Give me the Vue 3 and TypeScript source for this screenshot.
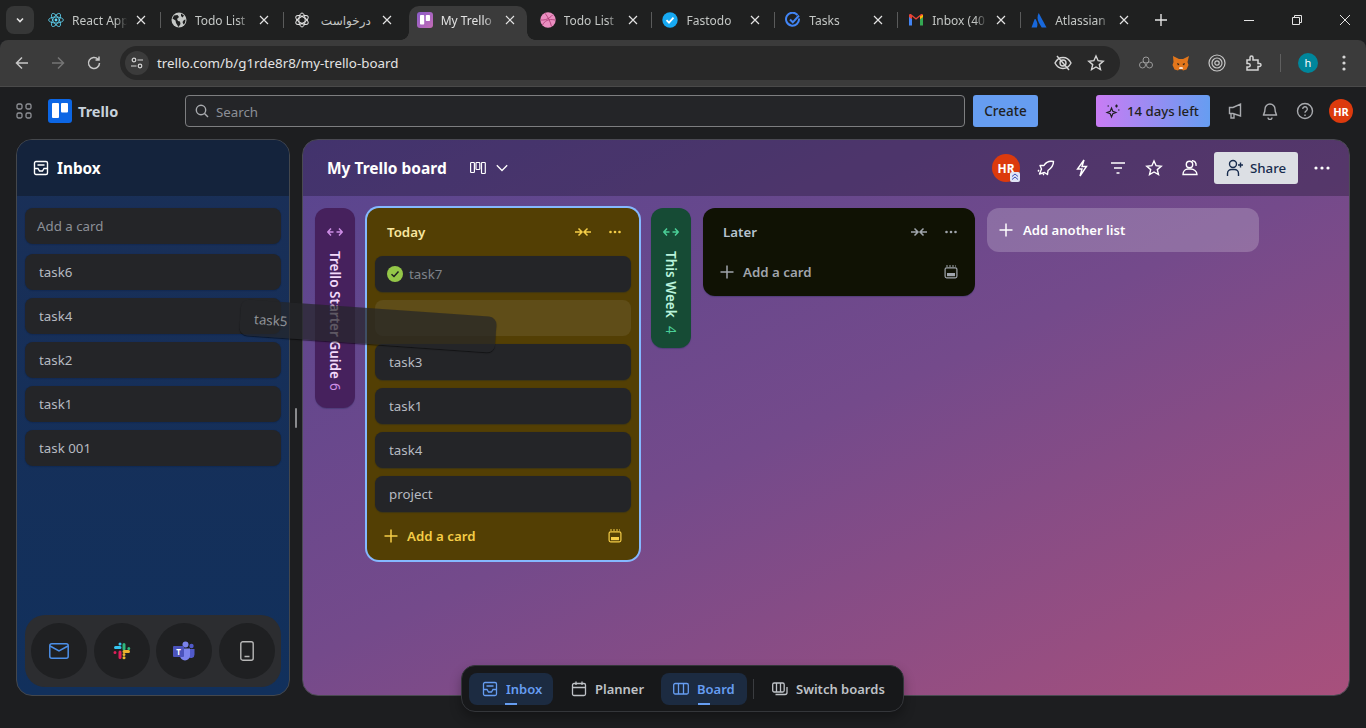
<script setup lang="ts">
const tabs = [
  { icon: 'react', title: 'React App' },
  { icon: 'globe', title: 'Todo List' },
  { icon: 'gpt', title: 'درخواست', rtl: true },
  { icon: 'trello', title: 'My Trello', active: true },
  { icon: 'dribbble', title: 'Todo List' },
  { icon: 'fastodo', title: 'Fastodo' },
  { icon: 'tasks', title: 'Tasks' },
  { icon: 'gmail', title: 'Inbox (40' },
  { icon: 'atlassian', title: 'Atlassian' }
]
const inboxCards = ['task6', 'task4', 'task2', 'task1', 'task 001']
const todayCards = ['task3', 'task1', 'task4', 'project']
</script>

<template>
  <div class="page">
    <div class="tabstrip">
      <button class="tab-search">
        <svg width="12" height="12" viewBox="0 0 12 12" fill="none" stroke="#e3e3e3" stroke-width="1.6"><path d="M3 4.5 6 7.5 9 4.5" /></svg>
      </button>
      <div v-for="(t, i) in tabs" :key="i" class="tab" :class="{ active: t.active, nosep: i === 0 || i === 3 || i === 4 }">
        <span class="favicon">
          <svg v-if="t.icon === 'react'" viewBox="0 0 16 16" fill="none" stroke="#61dafb" stroke-width=".8">
            <ellipse cx="8" cy="8" rx="7.4" ry="3" />
            <ellipse cx="8" cy="8" rx="7.4" ry="3" transform="rotate(60 8 8)" />
            <ellipse cx="8" cy="8" rx="7.4" ry="3" transform="rotate(120 8 8)" />
            <circle cx="8" cy="8" r="1.4" fill="#61dafb" stroke="none" />
          </svg>
          <svg v-else-if="t.icon === 'globe'" viewBox="0 0 16 16">
            <circle cx="8" cy="8" r="7.5" fill="#c4c7c5" />
            <path d="M3 3.5 6.5 3 8 5 6 7 7 9l2 .5.5 2.5-2 3L5 11 4.5 8.500 1.500 6.500zM10 1.500l3 2-1.500 2L10 4zM13 8l1.500-.500-.500 3.500-1.500 1.500L11.500 10z" fill="#1f2020" />
          </svg>
          <svg v-else-if="t.icon === 'gpt'" viewBox="0 0 16 16" fill="none" stroke="#e3e3e3" stroke-width="1">
            <ellipse cx="8" cy="8" rx="3.200" ry="7" />
            <ellipse cx="8" cy="8" rx="3.200" ry="7" transform="rotate(60 8 8)" />
            <ellipse cx="8" cy="8" rx="3.200" ry="7" transform="rotate(120 8 8)" />
          </svg>
          <svg v-else-if="t.icon === 'trello'" viewBox="0 0 16 16">
            <defs><linearGradient id="trelloFav" x1="0" y1="0" x2="1" y2="1"><stop offset="0" stop-color="#8a5cc9" /><stop offset="1" stop-color="#c46bb5" /></linearGradient></defs>
            <rect width="16" height="16" rx="3" fill="url(#trelloFav)" />
            <rect x="3" y="3" width="4.200" height="9.500" rx=".8" fill="#fff" />
            <rect x="8.800" y="3" width="4.200" height="6" rx=".8" fill="#fff" />
          </svg>
          <svg v-else-if="t.icon === 'dribbble'" viewBox="0 0 16 16" fill="none">
            <circle cx="8" cy="8" r="7.700" fill="#ea8ec0" />
            <path d="M5 1.200C8 5 10.500 10 11.500 14.500M1 8c4 .3 8-1 11.500-5M2.500 13c2-4 6-6.500 12.500-5" stroke="#a8366f" stroke-width=".8" />
          </svg>
          <svg v-else-if="t.icon === 'fastodo'" viewBox="0 0 16 16" fill="none">
            <circle cx="8" cy="8" r="7.700" fill="#17a9f2" />
            <path d="M4.500 8.200 7 10.700l4.500-5" stroke="#fff" stroke-width="1.800" />
          </svg>
          <svg v-else-if="t.icon === 'tasks'" viewBox="0 0 16 16" fill="none">
            <path d="M12.500 3A6.500 6.500 0 1 0 14 6.500" stroke="#4285f4" stroke-width="2" />
            <path d="M5 7.500 7.800 10.300 14 3.500" stroke="#4285f4" stroke-width="2" />
          </svg>
          <svg v-else-if="t.icon === 'gmail'" viewBox="0 0 16 16">
            <path d="M1 4v9.500h3V7z" fill="#4285f4" />
            <path d="M12 7v6.500h3V4z" fill="#34a853" />
            <path d="M1 3.500C1 2.200 2.500 1.700 3.500 2.500L8 6l4.500-3.500C13.500 1.700 15 2.200 15 3.500V5l-3 2.300V4.500L8 7.800 4 4.500v2.800L1 5z" fill="#ea4335" />
            <path d="M12 4.500 15 2.800V5l-3 2.300z" fill="#fbbc04" />
          </svg>
          <svg v-else viewBox="0 0 16 16">
            <path d="M7.700 1C6 4.500 6.200 7.500 8 11l2.700 4.500H15.500z" fill="#1868db" />
            <path d="M4.800 7.500C4.300 6.900 3.800 7 3.500 7.600L.5 15.500h5.400c1-2.500.6-5.500-1.100-8z" fill="#1868db" />
          </svg>
        </span>
        <span class="tab-title" :class="{ rtl: t.rtl }">{{ t.title }}</span>
        <svg class="tab-close" width="10" height="10" viewBox="0 0 10 10" stroke="#e3e3e3" stroke-width="1.200"><path d="M1 1l8 8M9 1 1 9" /></svg>
      </div>
      <svg class="new-tab" width="12" height="12" viewBox="0 0 12 12" stroke="#e3e3e3" stroke-width="1.400"><path d="M6 0v12M0 6h12" /></svg>
      <div class="win-controls">
        <svg width="10" height="10" viewBox="0 0 10 10" stroke="#e3e3e3"><path d="M0 5.500h10" /></svg>
        <svg width="10" height="10" viewBox="0 0 10 10" fill="none" stroke="#e3e3e3"><path d="M.5 2.500h7v7h-7zM2.500 2.500v-2h7v7h-2" /></svg>
        <svg width="10" height="10" viewBox="0 0 10 10" stroke="#e3e3e3"><path d="M0 0l10 10M10 0 0 10" /></svg>
      </div>
    </div>

    <div class="toolbar">
      <svg class="nav-ico" width="16" height="16" viewBox="0 0 16 16" fill="none" stroke="#c7c7c7" stroke-width="1.500"><path d="M14 8H2.500M8 2.500 2.500 8 8 13.500" /></svg>
      <svg class="nav-ico" width="16" height="16" viewBox="0 0 16 16" fill="none" stroke="#757575" stroke-width="1.500"><path d="M2 8h11.500M8 2.500 13.500 8 8 13.500" /></svg>
      <svg class="nav-ico" width="16" height="16" viewBox="0 0 16 16" fill="none" stroke="#c7c7c7" stroke-width="1.500"><path d="M13.500 8A5.500 5.500 0 1 1 12 4.200M13 1.500v3.500H9.500" /></svg>
      <div class="omnibox">
        <span class="site-info">
          <svg width="14" height="14" viewBox="0 0 14 14" fill="none" stroke="#d5d5d5" stroke-width="1.200"><circle cx="4" cy="4" r="1.800" /><path d="M7.500 4H13M1 10h5.500" /><circle cx="10" cy="10" r="1.800" /></svg>
        </span>
        <span class="url">trello.com/b/g1rde8r8/my-trello-board</span>
        <svg class="omni-eye" width="18" height="18" viewBox="0 0 18 18" fill="none" stroke="#d5d5d5" stroke-width="1.400"><path d="M1 9c2-4 5-5.500 8-5.500S15 5 17 9c-2 4-5 5.500-8 5.500S3 13 1 9z" /><circle cx="9" cy="9" r="3" /><path d="M3 2l12 14" /></svg>
        <svg class="omni-star" width="18" height="18" viewBox="0 0 18 18" fill="none" stroke="#d5d5d5" stroke-width="1.400"><path d="M9 2l2.100 4.700 5.100.5-3.900 3.400 1.200 5L9 13l-4.500 2.600 1.200-5L1.800 7.200l5.100-.5z" /></svg>
      </div>
      <div class="extensions">
        <svg width="16" height="16" viewBox="0 0 16 16" fill="none" stroke="#9a9a9a" stroke-width="1"><circle cx="8" cy="5" r="3" /><circle cx="4.500" cy="10" r="3" /><circle cx="11.500" cy="10" r="3" /></svg>
        <svg width="18" height="18" viewBox="0 0 18 18"><path d="M1 2l6 3h4l6-3-1.500 6 1 3-2 4.500-3.500 1-1-1H7l-1 1-3.500-1-2-4.500 1-3z" fill="#e2761b" /><path d="M5 9l2.500 1L6 11.500zM13 9l-2.500 1 1.500 1.500z" fill="#27201a" /><path d="M7 15h4l-.5-2h-3z" fill="#f6e0cf" /></svg>
        <svg width="18" height="18" viewBox="0 0 18 18" fill="none" stroke="#c7c7c7" stroke-width="1.200"><circle cx="9" cy="9" r="8" /><circle cx="9" cy="9" r="5" /><circle cx="9" cy="9" r="2.200" /></svg>
        <svg width="18" height="18" viewBox="0 0 18 18" fill="none" stroke="#d5d5d5" stroke-width="1.500"><path d="M3 6h3V3.500a1.500 1.500 0 0 1 3 0V6h5v3.500h1.500v0a1.500 1.500 0 0 1 0 3H14V16H3v-3h1.500a1.500 1.500 0 0 0 0-3.500H3z" /></svg>
        <span class="ext-sep"></span>
        <span class="profile">h</span>
        <svg class="chrome-menu" width="4" height="16" viewBox="0 0 4 16" fill="#d5d5d5"><circle cx="2" cy="2" r="1.600" /><circle cx="2" cy="8" r="1.600" /><circle cx="2" cy="14" r="1.600" /></svg>
      </div>
    </div>

    <header class="topbar">
      <svg class="grid-ico" width="16" height="16" viewBox="0 0 16 16" fill="none" stroke="#8f9196" stroke-width="1.300"><rect x="1" y="1" width="5" height="5" rx="1.500" /><rect x="10" y="1" width="5" height="5" rx="1.500" /><rect x="1" y="10" width="5" height="5" rx="1.500" /><rect x="10" y="10" width="5" height="5" rx="1.500" /></svg>
      <div class="logo">
        <svg width="24" height="24" viewBox="0 0 24 24"><rect width="24" height="24" rx="3" fill="#0c66e4" /><rect x="4" y="4" width="7" height="15" rx="1" fill="#fff" /><rect x="13" y="4" width="7" height="9.500" rx="1" fill="#fff" /></svg>
        <span>Trello</span>
      </div>
      <div class="search">
        <svg width="16" height="16" viewBox="0 0 16 16" fill="none" stroke="#a9abaf" stroke-width="1.400"><circle cx="7" cy="7" r="4.700" /><path d="M10.500 10.500 14 14" /></svg>
        <span class="search-text">Search</span>
      </div>
      <button class="create">Create</button>
      <button class="trial">
        <svg width="16" height="16" viewBox="0 0 16 16" fill="none" stroke="#1f1f21" stroke-width="1.200"><path d="M6.500 5 7.800 8.200 11 9.500 7.800 10.800 6.500 14 5.200 10.800 2 9.500 5.200 8.200zM11.500 1.500v3M10 3h3M13 7h1.500M2.500 3h1.500" /></svg>
        14 days left
      </button>
      <svg class="top-ico" width="18" height="18" viewBox="0 0 18 18" fill="none" stroke="#a9abaf" stroke-width="1.400"><path d="M14.500 2v12L7 11.500H3.500v-6H7zM5 11.500V16h3v-4" /></svg>
      <svg class="top-ico" width="18" height="18" viewBox="0 0 18 18" fill="none" stroke="#a9abaf" stroke-width="1.400"><path d="M9 2a5 5 0 0 0-5 5c0 4-1.500 5-1.500 6h13c0-1-1.500-2-1.500-6a5 5 0 0 0-5-5zM7 15.500a2 2 0 0 0 4 0" /></svg>
      <svg class="top-ico" width="18" height="18" viewBox="0 0 18 18" fill="none" stroke="#a9abaf" stroke-width="1.400"><circle cx="9" cy="9" r="7.500" /><path d="M6.700 7a2.300 2.300 0 1 1 3.300 2.100c-.7.400-1 .8-1 1.600" /><path d="M9 12.500v1.500" /></svg>
      <span class="avatar small">HR</span>
    </header>

    <main class="workspace">
      <aside class="inbox">
        <div class="inbox-head">
          <svg width="16" height="16" viewBox="0 0 16 16" fill="none" stroke="#fff" stroke-width="1.400"><rect x="1.500" y="1.500" width="13" height="13" rx="1.500" /><path d="M4.500 5h7M1.500 8.500h3.500l1.500 2.500h3l1.500-2.500h3.500" /></svg>
          <span>Inbox</span>
        </div>
        <div class="inbox-body">
          <div class="card add-input">Add a card</div>
          <div v-for="c in inboxCards" :key="c" class="card">{{ c }}</div>
          <div class="connect">
            <span class="round">
              <svg width="20" height="16" viewBox="0 0 20 16" fill="none" stroke="#4c8fe8" stroke-width="1.500"><rect x=".8" y=".8" width="18.400" height="14.400" rx="2" /><path d="M1 3l9 5 9-5" /></svg>
            </span>
            <span class="round">
              <svg width="18" height="18" viewBox="0 0 18 18" fill="none" stroke-linecap="round" stroke-width="3">
                <path d="M7 2v0M7 5.600H2.500" stroke="#36c5f0" />
                <path d="M11 2.500v4.500M15.800 6.500v0" stroke="#2eb67d" />
                <path d="M11 12.500v0M11 9.500h4.500" stroke="#ecb22e" />
                <path d="M7 10v5.500M2 10.500v0" stroke="#e01e5a" />
                <path d="M11 15.800v0" stroke="#ecb22e" />
              </svg>
            </span>
            <span class="round">
              <svg width="22" height="20" viewBox="0 0 22 20">
                <circle cx="12.500" cy="3.500" r="3" fill="#7b83eb" />
                <circle cx="18.500" cy="5" r="2.200" fill="#5059c9" />
                <path d="M14 8h7.500v5.500a3.500 3.500 0 0 1-6 2.500z" fill="#5059c9" />
                <path d="M7 7.500h10v7a5 5 0 0 1-10 0z" fill="#7b83eb" />
                <rect x="0" y="5" width="11" height="11" rx="1" fill="#4b53bc" />
                <text x="5.500" y="14" class="teams-t">T</text>
              </svg>
            </span>
            <span class="round">
              <svg width="14" height="20" viewBox="0 0 14 20" fill="none" stroke="#b8b8b8" stroke-width="1.400"><rect x=".8" y=".8" width="12.400" height="18.400" rx="2" /><path d="M4.500 15.500h5" /></svg>
            </span>
          </div>
        </div>
      </aside>

      <div class="splitter"><span></span></div>

      <section class="board">
        <div class="board-head">
          <h1>My Trello board</h1>
          <svg class="views-ico" width="16" height="16" viewBox="0 0 16 16" fill="none" stroke="#fff" stroke-width="1.200"><rect x=".6" y="2.500" width="3.800" height="10" rx=".7" /><rect x="6" y="2.500" width="3.800" height="7" rx=".7" /><rect x="11.500" y="2.500" width="3.800" height="11" rx=".7" /></svg>
          <svg class="chev" width="12" height="8" viewBox="0 0 12 8" fill="none" stroke="#fff" stroke-width="1.300"><path d="M.8 1.200 6 6.500l5.200-5.300" /></svg>
          <div class="board-actions">
            <span class="avatar big">HR
              <svg class="admin-badge" width="10" height="10" viewBox="0 0 10 10" fill="none" stroke="#3d4fb5" stroke-width="1"><rect width="10" height="10" rx="2" fill="#dfe4f5" stroke="none" /><path d="M2 4.500 5 2l3 2.500M2 7.500 5 5l3 2.500" /></svg>
            </span>
            <svg class="act" width="18" height="18" viewBox="0 0 18 18" fill="none" stroke="#fff" stroke-width="1.400" stroke-linejoin="round"><path d="M16.500 2.500c-4-.8-7.500.5-9.500 4L3 6.500l1.500 3.500-2 5 5-1.500 3 2 .5-4c3.500-2.500 5.500-5.500 5.500-9zM2 11l-1 1.500M6 16l1-1" /></svg>
            <svg class="act" width="18" height="18" viewBox="0 0 18 18" fill="none" stroke="#fff" stroke-width="1.400"><path d="M11 1 4.500 10H9L7 17l6.500-9.500H9z" /></svg>
            <svg class="act" width="18" height="18" viewBox="0 0 18 18" fill="none" stroke="#fff" stroke-width="1.500"><path d="M2 4h14M5 9h8M7.500 14h3" /></svg>
            <svg class="act" width="18" height="18" viewBox="0 0 18 18" fill="none" stroke="#fff" stroke-width="1.400"><path d="M9 2l2.100 4.700 5.100.5-3.900 3.400 1.200 5L9 13l-4.500 2.600 1.200-5L1.800 7.200l5.100-.5z" /></svg>
            <svg class="act" width="18" height="18" viewBox="0 0 18 18" fill="none" stroke="#fff" stroke-width="1.400"><circle cx="8.500" cy="5.500" r="3.200" /><path d="M2 15.500c0-3.500 2.500-5.500 5-5.500h3c2.500 0 6 2 6 5.500zM11 1.800c2.500-.3 4.500 2 4 5" /></svg>
            <button class="share">
              <svg width="18" height="18" viewBox="0 0 18 18" fill="none" stroke="#172b4d" stroke-width="1.400"><circle cx="7" cy="5" r="3.500" /><path d="M1.500 17v-2.500c0-2.500 2-4 4-4h3c2 0 4 1.500 4 4V17M14.500 3.500v5M12 6h5" /></svg>
              Share
            </button>
            <svg class="act more" width="16" height="4" viewBox="0 0 16 4" fill="#fff"><circle cx="2" cy="2" r="1.600" /><circle cx="8" cy="2" r="1.600" /><circle cx="14" cy="2" r="1.600" /></svg>
          </div>
        </div>

        <div class="lists">
          <div class="rail guide">
            <svg width="16" height="10" viewBox="0 0 16 10" fill="none" stroke="currentColor" stroke-width="1.500"><path d="M6.500 5H1M4 1.500.8 5 4 8.500M9.500 5H15M12 1.500 15.200 5 12 8.500" /></svg>
            <span class="rail-label">Trello Starter Guide</span>
            <span class="rail-count">6</span>
          </div>

          <div class="list today">
            <div class="list-head">
              <span class="list-title">Today</span>
              <svg class="collapse" width="18" height="10" viewBox="0 0 18 10" fill="none" stroke="currentColor" stroke-width="1.500"><path d="M1 5h6M4.500 1.500 8 5 4.500 8.500M17 5h-6M13.500 1.500 10 5l3.500 3.500" /></svg>
              <svg class="dots" width="12" height="4" viewBox="0 0 12 4" fill="currentColor"><circle cx="1.500" cy="2" r="1.300" /><circle cx="6" cy="2" r="1.300" /><circle cx="10.500" cy="2" r="1.300" /></svg>
            </div>
            <div class="list-cards">
              <div class="card done">
                <svg width="16" height="16" viewBox="0 0 16 16" fill="none"><circle cx="8" cy="8" r="8" fill="#94c748" /><path d="M4.500 8.200 7 10.500l4.500-5" stroke="#1f1f21" stroke-width="1.500" /></svg>
                <span>task7</span>
              </div>
              <div class="card placeholder"></div>
              <div v-for="c in todayCards" :key="c" class="card">{{ c }}</div>
            </div>
            <div class="list-foot">
              <svg width="14" height="14" viewBox="0 0 14 14" stroke="currentColor" stroke-width="1.500"><path d="M7 .5v13M.5 7h13" /></svg>
              <span>Add a card</span>
              <svg class="template" width="14" height="14" viewBox="0 0 14 14" fill="none" stroke="currentColor" stroke-width="1.200"><path d="M2 1h10" stroke-dasharray="2 1" /><rect x="1.100" y="2.800" width="11.800" height="10" rx="1.500" /><rect x="3" y="8" width="8" height="3.200" fill="currentColor" stroke="none" /></svg>
            </div>
          </div>

          <div class="rail week">
            <svg width="16" height="10" viewBox="0 0 16 10" fill="none" stroke="currentColor" stroke-width="1.500"><path d="M6.500 5H1M4 1.500.8 5 4 8.500M9.500 5H15M12 1.500 15.200 5 12 8.500" /></svg>
            <span class="rail-label">This Week</span>
            <span class="rail-count">4</span>
          </div>

          <div class="list later">
            <div class="list-head">
              <span class="list-title">Later</span>
              <svg class="collapse" width="18" height="10" viewBox="0 0 18 10" fill="none" stroke="currentColor" stroke-width="1.500"><path d="M1 5h6M4.500 1.500 8 5 4.500 8.500M17 5h-6M13.500 1.500 10 5l3.500 3.500" /></svg>
              <svg class="dots" width="12" height="4" viewBox="0 0 12 4" fill="currentColor"><circle cx="1.500" cy="2" r="1.300" /><circle cx="6" cy="2" r="1.300" /><circle cx="10.500" cy="2" r="1.300" /></svg>
            </div>
            <div class="list-foot">
              <svg width="14" height="14" viewBox="0 0 14 14" stroke="currentColor" stroke-width="1.500"><path d="M7 .5v13M.5 7h13" /></svg>
              <span>Add a card</span>
              <svg class="template" width="14" height="14" viewBox="0 0 14 14" fill="none" stroke="currentColor" stroke-width="1.200"><path d="M2 1h10" stroke-dasharray="2 1" /><rect x="1.100" y="2.800" width="11.800" height="10" rx="1.500" /><rect x="3" y="8" width="8" height="3.200" fill="currentColor" stroke="none" /></svg>
            </div>
          </div>

          <button class="add-list">
            <svg width="14" height="14" viewBox="0 0 14 14" stroke="#fff" stroke-width="1.500"><path d="M7 .5v13M.5 7h13" /></svg>
            Add another list
          </button>
        </div>
      </section>
    </main>

    <div class="drag-card">task5</div>

    <nav class="dock">
      <a class="dock-item on inbox-tab">
        <svg width="16" height="16" viewBox="0 0 16 16" fill="none" stroke="currentColor" stroke-width="1.300"><rect x="1.500" y="1.500" width="13" height="13" rx="1.500" /><path d="M4.500 5h7M1.500 8.500h3.500l1.500 2.500h3l1.500-2.500h3.500" /></svg>
        Inbox
      </a>
      <a class="dock-item planner-tab">
        <svg width="16" height="16" viewBox="0 0 16 16" fill="none" stroke="currentColor" stroke-width="1.300"><rect x="1.500" y="2.500" width="13" height="12" rx="1.500" /><path d="M1.500 6.500h13M5 .5v3.500M11 .5v3.500" /></svg>
        Planner
      </a>
      <a class="dock-item on board-tab">
        <svg width="16" height="16" viewBox="0 0 16 16" fill="none" stroke="currentColor" stroke-width="1.300"><rect x=".7" y="2.500" width="14.600" height="10.500" rx="1.500" /><path d="M5.500 2.500V13M10.500 2.500V13" /></svg>
        Board
      </a>
      <span class="dock-sep"></span>
      <a class="dock-item switch-tab">
        <svg width="16" height="16" viewBox="0 0 16 16" fill="none" stroke="currentColor" stroke-width="1.300"><rect x=".7" y="2" width="11.500" height="9" rx="1.500" /><path d="M4.500 2v9M8.500 2v9M15 6v5.500a2 2 0 0 1-2 2H3.500" /></svg>
        Switch boards
      </a>
    </nav>
  </div>
</template>

<style>
html, body {
  margin: 0;
  background: #1d1e20;
}
</style>

<style scoped>
.page {
  position: relative;
  width: 1366px;
  height: 728px;
  overflow: hidden;
  display: flex;
  flex-direction: column;
  background: #1d1e20;
  font-family: "Noto Sans", "DejaVu Sans", sans-serif;
  font-size: 13.3px;
  color: #b6c2cf;
}
button {
  border: 0;
  font-family: inherit;
  padding: 0;
}

.tabstrip {
  height: 40px;
  flex: none;
  display: flex;
  align-items: flex-end;
  background: #1f2020;
}
.tab-search {
  width: 28px;
  height: 28px;
  margin: 0 4px 6px 6px;
  border-radius: 8px;
  background: #363737;
  display: flex;
  align-items: center;
  justify-content: center;
}
.tab {
  position: relative;
  width: 122.9px;
  height: 34px;
  flex: none;
  display: flex;
  align-items: center;
  padding: 0 0 6px 10px;
  box-sizing: border-box;
  color: #c4c7c5;
  font-size: 12px;
}
.tab::before {
  content: "";
  position: absolute;
  left: -1px;
  top: 6px;
  height: 16px;
  width: 1px;
  background: #5a5b5b;
}
.tab.nosep::before {
  display: none;
}
.tab.active {
  color: #e3e3e3;
}
.tab.active::after {
  content: "";
  position: absolute;
  left: 2px;
  right: 3px;
  top: 0;
  bottom: 0;
  border-radius: 10px 10px 0 0;
  background: #3b3b3b;
}
.tab.active::before {
  display: block;
  left: -6px;
  right: -5px;
  top: auto;
  bottom: 0;
  width: auto;
  height: 8px;
  background:
    radial-gradient(circle at 0 0, transparent 7.5px, #3b3b3b 8px) left bottom / 8px 8px no-repeat,
    radial-gradient(circle at 100% 0, transparent 7.5px, #3b3b3b 8px) right bottom / 8px 8px no-repeat;
}
.tab.active > * {
  position: relative;
  z-index: 1;
}
.favicon {
  width: 16px;
  height: 16px;
  flex: none;
  display: block;
}
.favicon svg {
  display: block;
  width: 16px;
  height: 16px;
}
.tab-title {
  margin-left: 8px;
  width: 60px;
  flex: none;
  box-sizing: border-box;
  white-space: nowrap;
  overflow: hidden;
  -webkit-mask-image: linear-gradient(90deg, #000 72%, transparent 92%);
  mask-image: linear-gradient(90deg, #000 72%, transparent 92%);
}
.tab-title.rtl {
  direction: rtl;
  padding-left: 7px;
  padding-right: 7px;
  -webkit-mask-image: none;
  mask-image: none;
}
.tab-close {
  margin-left: 4px;
  flex: none;
}
.new-tab {
  margin: 0 0 14px 11px;
}
.win-controls {
  margin-left: auto;
  height: 40px;
  width: 142px;
  padding-left: 20px;
  box-sizing: border-box;
  display: flex;
  align-items: center;
  gap: 38px;
}

.toolbar {
  height: 46px;
  flex: none;
  display: flex;
  align-items: center;
  padding-left: 14px;
  background: #3b3b3b;
  border-radius: 8px 8px 0 0;
  border-bottom: 1px solid #4a4a4a;
  box-sizing: content-box;
}
.nav-ico {
  margin-right: 20px;
  flex: none;
}
.omnibox {
  width: 1000px;
  height: 34px;
  margin-left: -2px;
  flex: none;
  display: flex;
  align-items: center;
  border-radius: 17px;
  background: #282828;
  color: #e3e3e3;
}
.site-info {
  width: 24px;
  height: 24px;
  margin-left: 5px;
  border-radius: 50%;
  background: #3b3b3b;
  display: flex;
  align-items: center;
  justify-content: center;
}
.url {
  margin-left: 8px;
  font-size: 13.35px;
}
.omni-eye {
  margin-left: auto;
}
.omni-star {
  margin: 0 15px 0 15px;
}
.extensions {
  display: flex;
  align-items: center;
  margin-left: 18px;
  gap: 18px;
}
.ext-sep {
  width: 1px;
  height: 18px;
  background: #5f5f5f;
}
.profile {
  width: 20px;
  height: 20px;
  margin-left: -1px;
  border-radius: 50%;
  background: #00869b;
  color: #fff;
  font-size: 11px;
  line-height: 20px;
  text-align: center;
}
.chrome-menu {
  margin-left: 6px;
}

.topbar {
  height: 48px;
  flex: none;
  display: flex;
  align-items: center;
  padding-left: 16px;
}
.grid-ico {
  flex: none;
}
.logo {
  display: flex;
  align-items: center;
  gap: 6px;
  margin-left: 16px;
  width: 137px;
  font-size: 14.5px;
  font-weight: 700;
  color: #c7d1db;
}
.search {
  width: 780px;
  height: 32px;
  box-sizing: border-box;
  display: flex;
  align-items: center;
  gap: 6px;
  padding-left: 8px;
  border: 1px solid #7d7e80;
  border-radius: 4px;
  background: #242528;
  color: #8c8f97;
}
.search-text {
  padding-top: 1px;
}
.create {
  width: 65px;
  height: 32px;
  margin-left: 8px;
  border-radius: 3px;
  background: #669df1;
  color: #1f1f21;
  font-size: 13.5px;
  font-weight: 500;
}
.trial {
  width: 114px;
  height: 32px;
  margin-left: 58px;
  padding-left: 9px;
  border-radius: 3px;
  background: linear-gradient(90deg, #c97cf4, #669df1);
  color: #1f1f21;
  font-size: 13.2px;
  font-weight: 500;
  display: flex;
  align-items: center;
  gap: 6px;
}
.top-ico {
  margin-left: 17px;
  flex: none;
}
.trial + .top-ico {
  margin-left: 16px;
}
.avatar {
  flex: none;
  border-radius: 50%;
  background: #dc3a0d;
  color: #fff;
  font-weight: 700;
  display: flex;
  align-items: center;
  justify-content: center;
}
.avatar.small {
  width: 24px;
  height: 24px;
  margin-left: 15px;
  font-size: 11px;
}
.avatar.big {
  position: relative;
  width: 28px;
  height: 28px;
  margin-right: -1px;
  font-size: 12px;
}
.admin-badge {
  position: absolute;
  right: 0;
  bottom: 0;
}

.workspace {
  flex: 1;
  min-height: 0;
  display: flex;
  padding: 4px 16px 32px;
}
.inbox {
  width: 274px;
  flex: none;
  box-sizing: border-box;
  display: flex;
  flex-direction: column;
  border: 1px solid #44474c;
  border-radius: 16px;
  overflow: hidden;
  background: linear-gradient(180deg, #1a2f57, #11305c);
}
.inbox-head {
  height: 56px;
  flex: none;
  display: flex;
  align-items: center;
  gap: 8px;
  padding-left: 16px;
  background: #14233c;
  color: #fff;
  font-size: 15.3px;
  font-weight: 700;
}
.inbox-body {
  flex: 1;
  min-height: 0;
  display: flex;
  flex-direction: column;
  gap: 8px;
  padding: 12px 8px 8px;
}
.card {
  height: 36px;
  flex: none;
  box-sizing: border-box;
  display: flex;
  align-items: center;
  padding: 0 14px;
  border-radius: 8px;
  background: #242528;
  box-shadow: 0 1px 1px #091e4240, 0 0 1px #091e424f;
  color: #b6bac1;
}
.add-input {
  padding-left: 12px;
  color: #8c9097;
  margin-bottom: 2px;
}
.connect {
  margin-top: auto;
  height: 72px;
  display: flex;
  align-items: center;
  justify-content: space-between;
  padding: 0 6px;
  border-radius: 20px;
  background: #2c2d30;
}
.round {
  width: 56px;
  height: 56px;
  border-radius: 50%;
  background: #1f2022;
  display: flex;
  align-items: center;
  justify-content: center;
}
.teams-t {
  fill: #fff;
  font-size: 8px;
  font-weight: 700;
  text-anchor: middle;
}

.splitter {
  width: 12px;
  flex: none;
  display: flex;
  align-items: center;
  justify-content: center;
}
.splitter span {
  width: 2px;
  height: 20px;
  border-radius: 1px;
  background: #8a8b8d;
}

.board {
  flex: 1;
  min-width: 0;
  display: flex;
  flex-direction: column;
  border-radius: 16px;
  border: 1px solid #4a4a52;
  box-sizing: border-box;
  overflow: hidden;
  background: linear-gradient(155deg, #58458f 0%, #744a8b 50%, #a8507c 100%);
}
.board-head {
  height: 56px;
  flex: none;
  display: flex;
  align-items: center;
  padding: 0 19px 0 24px;
  background: rgba(23, 16, 38, 0.32);
  color: #fff;
}
.board-head h1 {
  margin: 0;
  font-size: 15.5px;
  font-weight: 700;
}
.views-ico {
  margin-left: 23px;
}
.chev {
  margin-left: 10px;
}
.board-actions {
  margin-left: auto;
  display: flex;
  align-items: center;
  gap: 18px;
}
.share {
  width: 84px;
  height: 32px;
  margin-left: -3px;
  border-radius: 3px;
  background: #dcdfe4;
  color: #172b4d;
  font-size: 13.3px;
  font-weight: 500;
  display: flex;
  align-items: center;
  justify-content: center;
  gap: 6px;
}
.act.more {
  margin-left: -2px;
}

.lists {
  display: flex;
  align-items: flex-start;
  gap: 12px;
  padding: 12px;
}
.rail {
  width: 40px;
  flex: none;
  box-sizing: border-box;
  display: flex;
  flex-direction: column;
  align-items: center;
  padding: 19px 0 17px;
  border-radius: 12px;
  font-size: 13.5px;
  font-weight: 600;
  box-shadow: 0 1px 1px #091e4240;
}
.rail-label {
  margin-top: 14px;
  writing-mode: vertical-rl;
}
.rail-count {
  margin-top: 4px;
  writing-mode: vertical-rl;
  font-weight: 400;
}
.guide {
  background: #46215d;
  color: #f3d9fa;
}
.guide svg, .guide .rail-count {
  color: #cd8de5;
}
.week {
  padding-bottom: 15px;
  background: #164b35;
  color: #baf3db;
}
.week .rail-count {
  margin-top: 8px;
}
.week svg, .week .rail-count {
  color: #4bce97;
}
.list {
  width: 272px;
  flex: none;
  box-sizing: border-box;
  border-radius: 12px;
  padding: 0 8px;
  box-shadow: 0 1px 1px #091e4240;
}
.list-head {
  height: 48px;
  display: flex;
  align-items: center;
  padding: 0 8px 0 12px;
}
.list-title {
  font-weight: 600;
}
.collapse {
  margin-left: auto;
}
.dots {
  margin-left: 17px;
  margin-right: 2px;
}
.list-cards {
  display: flex;
  flex-direction: column;
  gap: 8px;
}
.list-foot {
  height: 40px;
  display: flex;
  align-items: center;
  gap: 9px;
  padding: 0 9px;
  font-weight: 600;
}
.template {
  margin-left: auto;
}
.today {
  background: #533f04;
  color: #f5cd47;
  box-shadow: 0 0 0 2px #85b8ff;
}
.today .list-title {
  color: #f8e6a0;
}
.today .list-foot {
  height: 48px;
}
.later {
  background: #101204;
  color: #b6c2cf;
  padding-bottom: 8px;
}
.later .list-foot {
  height: 32px;
  color: #a0a5ac;
}
.later .collapse, .later .dots {
  color: #a0a5ac;
}
.done {
  gap: 6px;
  padding-left: 12px;
}
.done span {
  color: #7f838a;
}
.placeholder {
  background: #5f4d18;
  box-shadow: none;
}
.add-list {
  width: 272px;
  height: 44px;
  flex: none;
  display: flex;
  align-items: center;
  gap: 10px;
  padding: 0 12px;
  border-radius: 12px;
  background: rgba(255, 255, 255, 0.2);
  color: #fff;
  font-size: 13.1px;
  font-weight: 600;
}

.drag-card {
  position: absolute;
  left: 240px;
  top: 308px;
  width: 256px;
  height: 36px;
  box-sizing: border-box;
  padding-left: 14px;
  line-height: 38px;
  border-radius: 8px;
  background: rgba(36, 37, 40, 0.72);
  box-shadow: 0 1px 1px #00000080;
  color: #8f9297;
  transform: rotate(4deg);
}

.dock {
  position: absolute;
  left: 461px;
  top: 665px;
  width: 443px;
  height: 47px;
  box-sizing: border-box;
  display: flex;
  align-items: center;
  padding: 0 7px;
  border: 1px solid #34363a;
  border-radius: 14px;
  background: #17181a;
  box-shadow: 0 6px 12px #0000004d;
}
.dock-item {
  position: relative;
  height: 32px;
  box-sizing: border-box;
  display: flex;
  align-items: center;
  gap: 8px;
  border-radius: 8px;
  color: #bfc2c7;
  font-size: 13px;
  font-weight: 600;
}
.dock-item.on {
  background: #1c2b41;
  color: #669df1;
}
.dock-item.on::after {
  content: "";
  position: absolute;
  bottom: 0;
  width: 12px;
  height: 2px;
  background: #669df1;
}
.inbox-tab {
  width: 84px;
  padding-left: 13px;
}
.inbox-tab::after {
  left: 36px;
}
.planner-tab {
  width: 98px;
  margin: 0 5px;
  padding-left: 13px;
}
.board-tab {
  width: 86px;
  padding-left: 12px;
}
.board-tab::after {
  left: 37px;
}
.dock-sep {
  width: 1px;
  height: 20px;
  margin: 0 6px;
  background: #3a3c40;
}
.switch-tab {
  padding-left: 12px;
}
</style>
